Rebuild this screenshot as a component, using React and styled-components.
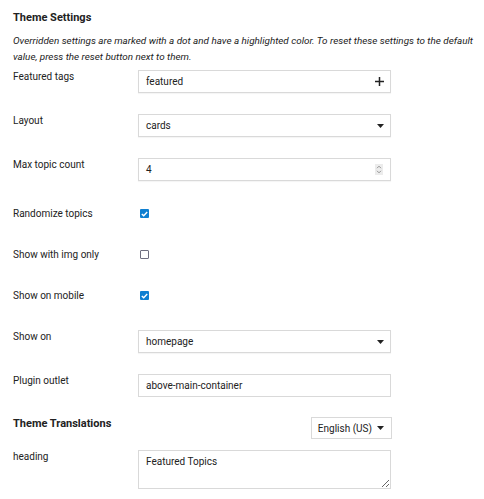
import { createGlobalStyle } from "styled-components";
import styled from "styled-components";

const GlobalStyle = createGlobalStyle`
  body {
    margin: 0;
    background: #fff;
    font-family: Roboto, "Liberation Sans", sans-serif;
    color: #222;
  }
`;

const Caret = () => (
  <svg width="7" height="4" viewBox="0 0 7 4">
    <path d="M0 0h7L3.5 4z" fill="#222" />
  </svg>
);

const Plus = () => (
  <svg width="9" height="9" viewBox="0 0 9 9">
    <path d="M4.5 0v9M0 4.5h9" stroke="#222" strokeWidth="1.5" />
  </svg>
);

const Spinner = () => (
  <SpinBox>
    <svg width="6" height="9" viewBox="0 0 6 9">
      <path
        d="M1 3.2L3 1.2L5 3.2M1 5.8L3 7.8L5 5.8"
        fill="none"
        stroke="#8a8a8a"
        strokeWidth="0.9"
      />
    </svg>
  </SpinBox>
);

const Check = ({ checked }) => (
  <Box $checked={checked}>
    {checked && (
      <svg width="7" height="6" viewBox="0 0 7 6">
        <path d="M0.8 3L2.7 4.8L6.2 1" fill="none" stroke="#fff" strokeWidth="1.4" />
      </svg>
    )}
  </Box>
);

const App = () => {
  return (
    <Page>
      <GlobalStyle />
      <Heading>Theme Settings</Heading>
      <Note>
        Overridden settings are marked with a dot and have a highlighted color. To reset
        these settings to the default value, press the reset button next to them.
      </Note>

      <Row $mb={21}>
        <Label>Featured tags</Label>
        <Field>
          <Value>featured</Value>
          <Plus />
        </Field>
      </Row>

      <Row $mb={21}>
        <Label>Layout</Label>
        <Field>
          <Value>cards</Value>
          <Caret />
        </Field>
      </Row>

      <Row $mb={26}>
        <Label>Max topic count</Label>
        <Field>
          <Value>4</Value>
          <Spinner />
        </Field>
      </Row>

      <Row $mb={27}>
        <Label>Randomize topics</Label>
        <Check checked />
      </Row>

      <Row $mb={27}>
        <Label>Show with img only</Label>
        <Check />
      </Row>

      <Row $mb={27}>
        <Label>Show on mobile</Label>
        <Check checked />
      </Row>

      <Row $mb={21}>
        <Label>Show on</Label>
        <Field>
          <Value>homepage</Value>
          <Caret />
        </Field>
      </Row>

      <Row $mb={20}>
        <Label>Plugin outlet</Label>
        <TextInput readOnly value="above-main-container" />
      </Row>

      <TranslationsBar>
        <SubHeading>Theme Translations</SubHeading>
        <LocaleButton>
          <span>English (US)</span>
          <Caret />
        </LocaleButton>
      </TranslationsBar>

      <Row $mb={0}>
        <Label>heading</Label>
        <TextArea readOnly value="Featured Topics" />
      </Row>
    </Page>
  );
};

export default App;

const Page = styled.div`
  width: 484px;
  height: 499px;
  box-sizing: border-box;
  padding: 10px 13px 0;
  overflow: hidden;
`;

const Heading = styled.h2`
  margin: 0;
  font-size: 11px;
  line-height: 16px;
  font-weight: 700;
`;

const SubHeading = styled(Heading)`
  line-height: 14px;
`;

const Note = styled.p`
  width: 468px;
  margin: 7px 0 5px;
  font-size: 9.9px;
  line-height: 16px;
  font-style: italic;
`;

const Row = styled.div`
  display: flex;
  align-items: flex-start;
  margin-bottom: ${({ $mb }) => $mb}px;
`;

const Label = styled.div`
  width: 125px;
  flex-shrink: 0;
  font-size: 10px;
  line-height: 14px;
`;

const Field = styled.div`
  width: 253px;
  height: 23px;
  box-sizing: border-box;
  display: flex;
  align-items: center;
  justify-content: space-between;
  padding: 0 6px 0 7px;
  border: 1px solid #d9d9d9;
  background: #fff;
  box-shadow: 0 1px 1px rgba(0, 0, 0, 0.04);
`;

const Value = styled.span`
  font-size: 10px;
`;

const TextInput = styled.input`
  width: 253px;
  height: 23px;
  box-sizing: border-box;
  margin: 0;
  padding: 0 7px;
  border: 1px solid #d9d9d9;
  outline: none;
  font-family: inherit;
  font-size: 10px;
  color: #222;
`;

const TextArea = styled.textarea`
  width: 253px;
  height: 39px;
  box-sizing: border-box;
  margin: 0;
  padding: 4px 7px;
  border: 1px solid #d9d9d9;
  outline: none;
  resize: vertical;
  font-family: inherit;
  font-size: 10px;
  line-height: 14px;
  color: #222;
`;

const SpinBox = styled.span`
  width: 8px;
  height: 11px;
  display: flex;
  align-items: center;
  justify-content: center;
  background: #ececec;
  margin-right: 1px;
`;

const Box = styled.span`
  width: 9px;
  height: 9px;
  box-sizing: border-box;
  margin: 2px 0 0 2px;
  display: flex;
  align-items: center;
  justify-content: center;
  border-radius: 1px;
  background: ${({ $checked }) => ($checked ? "#0f7fd1" : "#fff")};
  border: ${({ $checked }) => ($checked ? "none" : "1px solid #6f6f80")};
`;

const TranslationsBar = styled.div`
  display: flex;
  align-items: flex-start;
  justify-content: space-between;
  width: 379px;
  margin-bottom: 11px;
`;

const LocaleButton = styled.div`
  height: 22px;
  box-sizing: border-box;
  display: flex;
  align-items: center;
  gap: 5px;
  padding: 0 7px 0 6px;
  border: 1px solid #d9d9d9;
  font-size: 10px;
  white-space: nowrap;
  background: #fff;
`;
